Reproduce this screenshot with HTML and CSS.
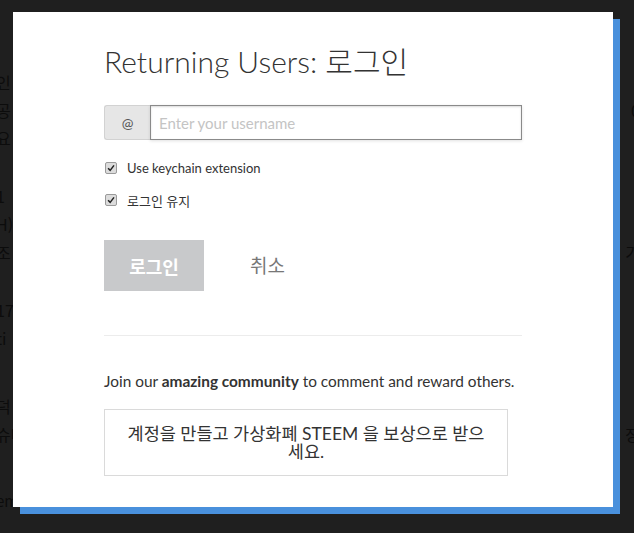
FILE: index.html
```html
<!DOCTYPE html>
<html lang="ko">
<head>
  <meta charset="UTF-8" />
  <title>로그인</title>
  <link rel="stylesheet" href="styles.css">
</head>
<body>
  <div class="feed">
    <p class="feed-line l1">인</p>
    <p class="feed-line l2">공 <span class="right">0</span></p>
    <p class="feed-line l3">요 5</p>
    <p class="feed-line l4">1</p>
    <p class="feed-line l5">H)</p>
    <p class="feed-line l6">조 <span class="right">기</span></p>
    <p class="feed-line l7">17</p>
    <p class="feed-line l8">ti</p>
    <p class="feed-line l9">덕</p>
    <p class="feed-line l10">슈다 <span class="right">장</span></p>
    <p class="feed-line l11">emhun • 5시간 전</p>
  </div>

  <div class="modal">
    <h1 class="modal-title">Returning Users: 로그인</h1>

    <div class="input-group">
      <span class="addon">@</span>
      <input type="text" class="username" placeholder="Enter your username" />
    </div>

    <label class="check-row">
      <span class="check">
        <svg viewBox="0 0 12 12" width="12" height="12"><path d="M2.5 6.2 L5 8.8 L9.6 2.8" fill="none" stroke="#222" stroke-width="1.8"/></svg>
      </span>
      Use keychain extension
    </label>
    <label class="check-row">
      <span class="check">
        <svg viewBox="0 0 12 12" width="12" height="12"><path d="M2.5 6.2 L5 8.8 L9.6 2.8" fill="none" stroke="#222" stroke-width="1.8"/></svg>
      </span>
      로그인 유지
    </label>

    <div class="actions">
      <button class="btn-login">로그인</button>
      <button class="btn-cancel">취소</button>
    </div>

    <hr class="divider" />

    <p class="join">Join our <strong>amazing community</strong> to comment and reward others.</p>
    <a class="signup" href="#">계정을 만들고 가상화폐 STEEM 을 보상으로 받으세요.</a>
  </div>
</body>
</html>
```

FILE: styles.css
```css
body {
  margin: 0;
  height: 533px;
  overflow: hidden;
  background: #1f1f1f;
  font-family: 'Lato', 'Noto Sans CJK KR', sans-serif;
  color: #333;
}

.feed {
  padding-top: 70px;
  margin-left: -4px;
  color: #0c0c0c;
  font-size: 16px;
  font-family: 'Noto Sans CJK KR', sans-serif;
}

.feed-line {
  margin: 0;
  height: 28px;
  display: flex;
  justify-content: space-between;
}

.feed-line .right { margin-right: -6px; }
.feed-line.l4, .feed-line.l7 { margin-top: 30px; }
.feed-line.l9 { margin-top: 40px; }
.feed-line.l11 { margin-top: 40px; font-size: 15px; }

.modal {
  position: absolute;
  top: 12px;
  left: 13px;
  width: 418px;
  padding: 0 91px 31px;
  background: #fff;
  box-shadow: 7px 7px 0 #4990dc;
}

.modal-title {
  margin: 29px 0 24px;
  font-size: 30px;
  font-weight: 300;
  line-height: 40px;
  color: #333;
}

.input-group {
  display: flex;
  height: 35px;
  margin-bottom: 20px;
}

.addon {
  width: 45px;
  display: flex;
  align-items: center;
  justify-content: center;
  background: #e6e6e6;
  border: 1px solid #d2d2d2;
  border-right: none;
  border-radius: 3px 0 0 3px;
  color: #555;
  font-size: 14px;
}

.username {
  flex: 1;
  border: 1px solid #8a8a8a;
  box-shadow: inset 0 1px 2px rgba(0, 0, 0, 0.15), 0 1px 3px rgba(0, 0, 0, 0.12);
  padding: 0 8px;
  font-family: inherit;
  font-size: 15px;
  outline: none;
}

.username::placeholder { color: #c4c4c4; }

.check-row {
  display: flex;
  align-items: center;
  height: 16px;
  margin-bottom: 16px;
  font-size: 13px;
  color: #333;
}

.check {
  width: 10px;
  height: 10px;
  margin: 0 10px 0 1px;
  border: 1px solid #9a9a9a;
  border-radius: 2px;
  background: #dcdcdc;
  display: flex;
  align-items: center;
  justify-content: center;
}

.actions {
  display: flex;
  align-items: center;
  margin-top: 32px;
}

.btn-login {
  width: 100px;
  height: 51px;
  border: none;
  background: #c8c9cb;
  color: #fff;
  font-family: 'Noto Sans CJK KR', sans-serif;
  font-weight: 700;
  font-size: 18px;
}

.btn-cancel {
  margin-left: 46px;
  padding: 0 0 3px;
  border: none;
  background: none;
  color: #777;
  font-family: 'Noto Sans CJK KR', sans-serif;
  font-size: 19px;
}

.divider {
  margin: 44px 0 0;
  border: none;
  border-top: 1px solid #ececec;
}

.join {
  margin: 35px 0 18px;
  font-size: 15.4px;
  line-height: 20px;
}

.join strong { font-weight: 700; }

.signup {
  display: block;
  width: 360px;
  padding: 15px 21px 14px;
  border: 1px solid #dadada;
  text-align: center;
  text-decoration: none;
  color: #333;
  font-size: 17.5px;
  line-height: 18px;
}
```
